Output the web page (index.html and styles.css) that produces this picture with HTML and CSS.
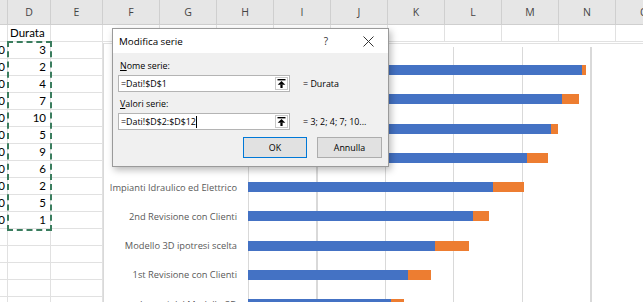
FILE: index.html
```html
<!DOCTYPE html>
<html lang="it">
<head>
  <meta charset="UTF-8">
  <title>Modifica serie</title>
  <link rel="stylesheet" href="styles.css">
</head>
<body>
<div class="sheet">
  <div class="row head">
    <div class="c"></div><div class="c">D</div><div class="c">E</div><div class="c">F</div><div class="c">G</div>
    <div class="c">H</div><div class="c">I</div><div class="c">J</div><div class="c">K</div><div class="c">L</div>
    <div class="c">M</div><div class="c">N</div><div class="c">O</div>
  </div>
  <div class="row">
    <div class="c"></div><div class="c">Durata</div><div class="c"></div><div class="c"></div><div class="c"></div>
    <div class="c"></div><div class="c"></div><div class="c"></div><div class="c"></div><div class="c"></div>
    <div class="c"></div><div class="c"></div><div class="c"></div>
  </div>
  <div class="row"><div class="c cut"><span>40</span></div><div class="c num">3</div><div class="c"></div></div>
  <div class="row"><div class="c cut"><span>40</span></div><div class="c num">2</div><div class="c"></div></div>
  <div class="row"><div class="c cut"><span>40</span></div><div class="c num">4</div><div class="c"></div></div>
  <div class="row"><div class="c cut"><span>40</span></div><div class="c num">7</div><div class="c"></div></div>
  <div class="row"><div class="c cut"><span>40</span></div><div class="c num">10</div><div class="c"></div></div>
  <div class="row"><div class="c cut"><span>40</span></div><div class="c num">5</div><div class="c"></div></div>
  <div class="row"><div class="c cut"><span>40</span></div><div class="c num">9</div><div class="c"></div></div>
  <div class="row"><div class="c cut"><span>40</span></div><div class="c num">6</div><div class="c"></div></div>
  <div class="row"><div class="c cut"><span>40</span></div><div class="c num">2</div><div class="c"></div></div>
  <div class="row"><div class="c cut"><span>40</span></div><div class="c num">5</div><div class="c"></div></div>
  <div class="row"><div class="c cut"><span>40</span></div><div class="c num">1</div><div class="c"></div></div>
  <div class="row"><div class="c"></div><div class="c"></div><div class="c"></div></div>
  <div class="row"><div class="c"></div><div class="c"></div><div class="c"></div></div>
  <div class="row"><div class="c"></div><div class="c"></div><div class="c"></div></div>
  <div class="row"><div class="c"></div><div class="c"></div><div class="c"></div></div>
  <div class="row"><div class="c"></div><div class="c"></div><div class="c"></div></div>

  <div class="marquee"></div>

  <div class="chart">
    <div class="labels">
      <div class="label">Consegna Progetto</div>
      <div class="label">Pratiche Comunali</div>
      <div class="label">Progetto Esecutivo</div>
      <div class="label">Computo Metrico</div>
      <div class="label">Impianti Idraulico ed Elettrico</div>
      <div class="label">2nd Revisione con Clienti</div>
      <div class="label">Modello 3D ipotresi scelta</div>
      <div class="label">1st Revisione con Clienti</div>
      <div class="label">Ipotesi del Modello 3D</div>
      <div class="label">Rilievo</div>
      <div class="label">Sopralluogo</div>
    </div>
    <div class="plot">
      <div class="bar-row"><div class="bar start" style="width:334px"></div><div class="bar dur" style="width:4px"></div></div>
      <div class="bar-row"><div class="bar start" style="width:314px"></div><div class="bar dur" style="width:17px"></div></div>
      <div class="bar-row"><div class="bar start" style="width:303px"></div><div class="bar dur" style="width:7px"></div></div>
      <div class="bar-row"><div class="bar start" style="width:279px"></div><div class="bar dur" style="width:21px"></div></div>
      <div class="bar-row"><div class="bar start" style="width:245px"></div><div class="bar dur" style="width:31px"></div></div>
      <div class="bar-row"><div class="bar start" style="width:225px"></div><div class="bar dur" style="width:16px"></div></div>
      <div class="bar-row"><div class="bar start" style="width:187px"></div><div class="bar dur" style="width:34px"></div></div>
      <div class="bar-row"><div class="bar start" style="width:160px"></div><div class="bar dur" style="width:23px"></div></div>
      <div class="bar-row"><div class="bar start" style="width:143px"></div><div class="bar dur" style="width:13px"></div></div>
      <div class="bar-row"><div class="bar start" style="width:133px"></div><div class="bar dur" style="width:7px"></div></div>
      <div class="bar-row"><div class="bar start" style="width:119px"></div><div class="bar dur" style="width:10px"></div></div>
    </div>
  </div>

  <div class="dialog">
    <div class="title">
      <span class="title-text">Modifica serie</span>
      <span class="help">?</span>
      <span class="close">
        <svg width="11" height="11" viewBox="0 0 11 11"><path d="M0.5 0.5 L10.5 10.5 M10.5 0.5 L0.5 10.5" stroke="#333" stroke-width="1" fill="none"/></svg>
      </span>
    </div>
    <div class="body">
      <div class="field-label"><u>N</u>ome serie:</div>
      <div class="field">
        <div class="input">
          <span class="value">=Dati!$D$1</span>
          <span class="pick">
            <svg width="9" height="9" viewBox="0 0 9 9"><rect x="0.5" y="0" width="8" height="1.4" fill="#000"/><path d="M4.5 2 L8.3 5.8 L0.7 5.8 Z" fill="#000"/><rect x="3.4" y="5.6" width="2.2" height="3.4" fill="#000"/></svg>
          </span>
        </div>
        <span class="preview">= Durata</span>
      </div>
      <div class="field-label second"><u>V</u>alori serie:</div>
      <div class="field">
        <div class="input">
          <span class="value">=Dati!$D$2:$D$12</span><span class="caret"></span>
          <span class="pick">
            <svg width="9" height="9" viewBox="0 0 9 9"><rect x="0.5" y="0" width="8" height="1.4" fill="#000"/><path d="M4.5 2 L8.3 5.8 L0.7 5.8 Z" fill="#000"/><rect x="3.4" y="5.6" width="2.2" height="3.4" fill="#000"/></svg>
          </span>
        </div>
        <span class="preview">= 3; 2; 4; 7; 10...</span>
      </div>
      <div class="buttons">
        <div class="btn ok">OK</div>
        <div class="btn">Annulla</div>
      </div>
    </div>
  </div>
</div>
</body>
</html>
```

FILE: styles.css
```css
*{margin: 0; padding: 0; box-sizing: border-box;}
body{
  width: 643px;
  height: 302px;
  overflow: hidden;
  background: #fff;
  font-family: "Lato", "Liberation Sans", sans-serif;
  color: #000;
}
.sheet{
  position: relative;
  width: 643px;
  height: 302px;
  overflow: hidden;
}

/* foglio */
.row{
  display: grid;
  grid-template-columns: 8px 43px 52px repeat(10, 57px);
  height: 17px;
}
.row .c{
  border-right: 1px solid #e1e1e1;
  border-bottom: 1px solid #e1e1e1;
  font-size: 11.5px;
  line-height: 16px;
  padding: 0 2px;
  white-space: nowrap;
  overflow: hidden;
}
.row .num{
  text-align: right;
  padding-right: 4px;
}
.row .cut{
  display: flex;
  justify-content: flex-end;
  padding: 0 2px 0 0;
}
.head{
  height: 25px;
  background: #e6e6e6;
}
.head .c{
  border-color: #cfcfcf;
  font-family: "Open Sans", sans-serif;
  font-size: 10.5px;
  line-height: 24px;
  text-align: center;
  color: #444;
}
.marquee{
  position: absolute;
  left: 7px;
  top: 41px;
  width: 45px;
  height: 190px;
  border: 2px dashed #3a7d5e;
}

/* grafico */
.chart{
  position: absolute;
  left: 103px;
  top: 43px;
  width: 560px;
  height: 280px;
  display: flex;
  padding-top: 3px;
  background: #fff;
  border-left: 1px solid #d9d9d9;
  border-top: 1px solid #e1e1e1;
}
.labels{
  width: 144px;
  padding-top: 8.4px;
}
.label{
  height: 29.25px;
  display: flex;
  align-items: center;
  justify-content: flex-end;
  padding-right: 11px;
  font-family: "Open Sans", sans-serif;
  font-size: 9.3px;
  color: #595959;
  white-space: nowrap;
}
.plot{
  flex: 1;
  padding-top: 8.4px;
  background: repeating-linear-gradient(to right, #d9d9d9 0 1px, transparent 1px 68.5px);
}
.bar-row{
  height: 29.25px;
  display: flex;
  align-items: center;
}
.bar{
  height: 10px;
}
.start{
  background: #4472c4;
}
.dur{
  background: #ed7d31;
}

/* finestra di dialogo */
.dialog{
  position: absolute;
  left: 112px;
  top: 28px;
  width: 277px;
  height: 139px;
  background: #f0f0f0;
  border: 1px solid #9a9a9a;
  box-shadow: 2px 3px 7px rgba(0,0,0,.28);
  font-family: "Open Sans", sans-serif;
}
.title{
  height: 24px;
  display: flex;
  align-items: center;
  background: #fff;
  font-size: 9.8px;
}
.title-text{
  padding-left: 6px;
  flex: 1;
}
.help{
  width: 44px;
  text-align: center;
  font-size: 10px;
  color: #333;
}
.close{
  width: 40px;
  display: flex;
  justify-content: center;
}
.body{
  padding: 5px 6px 0 5px;
  font-size: 8.9px;
}
.field-label{
  height: 15px;
  line-height: 15px;
  padding-left: 2px;
}
.field-label.second{
  margin-top: 4px;
}
.field{
  display: flex;
  align-items: center;
  margin-top: 2px;
}
.input{
  width: 172px;
  height: 17px;
  display: flex;
  align-items: center;
  background: #fff;
  border: 1px solid #b4b4b4;
  padding-left: 2px;
}
.caret{
  width: 1px;
  height: 12px;
  background: #000;
}
.pick{
  margin-left: auto;
  margin-right: 1px;
  width: 13px;
  height: 13px;
  display: flex;
  align-items: center;
  justify-content: center;
  border: 1px solid #c8c8c8;
}
.preview{
  margin-left: 13px;
}
.buttons{
  display: flex;
  justify-content: flex-end;
  gap: 10px;
  margin-top: 7px;
}
.btn{
  width: 65px;
  height: 21px;
  line-height: 19px;
  text-align: center;
  background: #e1e1e1;
  border: 1px solid #adadad;
}
.btn.ok{
  width: 64px;
  border-color: #0078d7;
}
```
